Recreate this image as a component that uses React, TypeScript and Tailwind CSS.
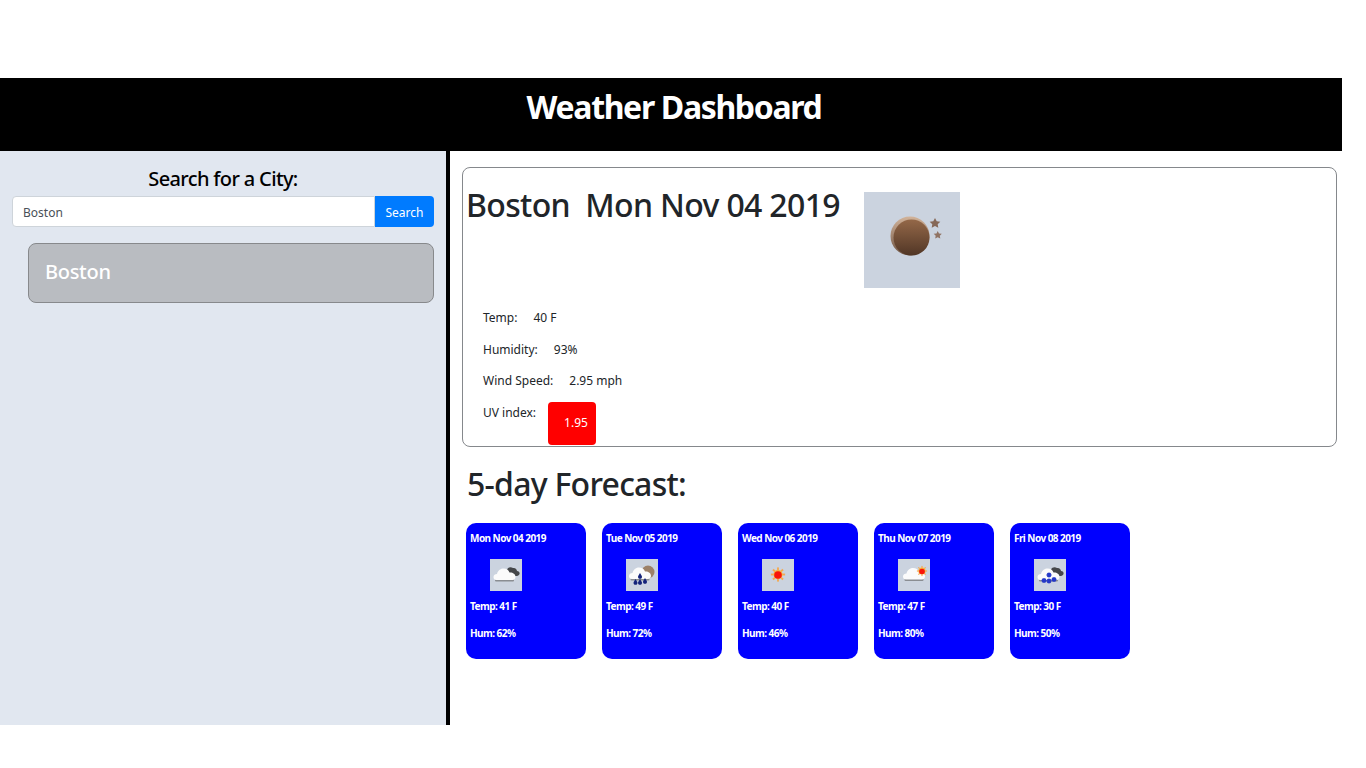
const font = "font-['Noto_Sans',sans-serif]";

function MoonIcon() {
  return (
    <svg viewBox="0 0 96 96" className="w-full h-full">
      <defs>
        <linearGradient id="moon" x1="0" y1="0" x2="0" y2="1">
          <stop offset="0" stopColor="#946848" />
          <stop offset="1" stopColor="#513626" />
        </linearGradient>
        <linearGradient id="rim" x1="0" y1="0" x2="0" y2="1">
          <stop offset="0" stopColor="#d2b39a" />
          <stop offset="1" stopColor="#6f5443" />
        </linearGradient>
      </defs>
      <circle cx="46" cy="44" r="19.500" fill="url(#rim)" />
      <circle cx="47.500" cy="45.500" r="18" fill="url(#moon)" />
      <path d="M71 26l1.700 3.300 3.600.4-2.600 2.500.6 3.600-3.300-1.800-3.300 1.800.6-3.600-2.600-2.500 3.600-.4z" fill="#7a5540" opacity="0.85" />
      <path d="M73.700 39l1.300 2.500 2.800.3-2 1.900.5 2.800-2.600-1.300-2.500 1.300.5-2.800-2-1.900 2.800-.3z" fill="#86624e" opacity="0.85" />
    </svg>
  );
}

function Cloud({ x = 0, y = 0 }: { x?: number; y?: number }) {
  return (
    <g transform={`translate(${x} ${y})`}>
      <path d="M5 20.500h19v1a1 1 0 0 1-1 1H6a1 1 0 0 1-1-1z" fill="#8a8d92" />
      <path
        d="M6.500 21C4 21 3.500 19.500 3.500 18C3.500 16 5 15 7 15C8 11 11 9.500 13.500 9.500C16.500 9.500 18.500 11 19.500 13.500C22 13 25.500 14.500 25.500 18C25.500 20 24 21 22.500 21Z"
        fill="#fbfbfb"
      />
    </g>
  );
}

function DarkCloud() {
  return (
    <path
      d="M17 10.500C18 8 21 7.500 23 9C25 8.500 27 10 27 12C29 12 30 13.500 29.500 15C29 16.500 27.500 17 26 17H20Z"
      fill="#45474a"
    />
  );
}

function Sun({ cx, cy, r, ray }: { cx: number; cy: number; r: number; ray: number }) {
  const rays = [0, 45, 90, 135, 180, 225, 270, 315];
  return (
    <g>
      {rays.map((a) => (
        <rect
          key={a}
          x={cx - ray / 3}
          y={cy - r - ray - 0.5}
          width={(ray * 2) / 3}
          height={ray}
          fill="#f4a950"
          transform={`rotate(${a} ${cx} ${cy})`}
        />
      ))}
      <circle cx={cx} cy={cy} r={r + 0.8} fill="#f7b23a" />
      <circle cx={cx} cy={cy + 0.5} r={r} fill="#f8140a" />
    </g>
  );
}

function Drop({ x, y }: { x: number; y: number }) {
  return <path d={`M${x} ${y - 3}l1.800 3a2 2 0 1 1-3.600 0z`} fill="#14237a" />;
}

function Flake({ x, y }: { x: number; y: number }) {
  return (
    <g stroke="#2438c8" strokeWidth="1.300">
      <path d={`M${x} ${y - 2.500}v5M${x - 2.500} ${y}h5M${x - 1.700} ${y - 1.700}l3.400 3.400M${x + 1.700} ${y - 1.700}l-3.400 3.400`} />
    </g>
  );
}

function ForecastIcon({ kind }: { kind: string }) {
  return (
    <svg viewBox="0 0 32 32" className="w-8 h-8 bg-[#cbd3df] ml-5 mt-[14px]">
      {kind === "cloudy" && (
        <g>
          <DarkCloud />
          <Cloud />
        </g>
      )}
      {kind === "rain" && (
        <g>
          <circle cx="22" cy="13" r="6.500" fill="#9c8168" />
          <Cloud x={-0.5} y={-1} />
          <Drop x={14} y={17} />
          <Drop x={9.500} y={23} />
          <Drop x={14} y={23} />
          <Drop x={19} y={22} />
        </g>
      )}
      {kind === "sun" && <Sun cx={16} cy={15.500} r={3.800} ray={2.800} />}
      {kind === "partly" && (
        <g>
          <Cloud x={1.500} y={-0.5} />
          <Sun cx={24} cy={12} r={2.800} ray={1.800} />
        </g>
      )}
      {kind === "snow" && (
        <g>
          <DarkCloud />
          <Cloud />
          <Flake x={15} y={16} />
          <Flake x={10} y={21.500} />
          <Flake x={15} y={22} />
          <Flake x={20} y={20.500} />
        </g>
      )}
    </svg>
  );
}

const days = [
  { date: "Mon Nov 04 2019", kind: "cloudy", temp: "41", hum: "62" },
  { date: "Tue Nov 05 2019", kind: "rain", temp: "49", hum: "72" },
  { date: "Wed Nov 06 2019", kind: "sun", temp: "40", hum: "46" },
  { date: "Thu Nov 07 2019", kind: "partly", temp: "47", hum: "80" },
  { date: "Fri Nov 08 2019", kind: "snow", temp: "30", hum: "50" },
];

export default function App() {
  return (
    <div className={`${font} bg-white min-h-[768px] pt-[78px] text-[#212529]`}>
      <div className="w-[1342px]">
        <header className="bg-black h-[73px] pt-[7px] pl-[6px] text-center">
          <h1 className="text-[32px] leading-[44px] font-bold text-white tracking-[-1.35px]">Weather Dashboard</h1>
        </header>

        <div className="flex h-[574px]">
          <aside className="w-[450px] shrink-0 bg-[#e1e7f0] border-r-4 border-black pl-3 pr-3">
            <h2 className="text-[20px] leading-[24px] font-medium text-black text-center mt-4 tracking-[-0.65px]">Search for a City:</h2>
            <div className="flex mt-[5px] w-[422px] h-[31px]">
              <input
                readOnly
                value="Boston"
                className="flex-1 min-w-0 bg-white border border-[#ced4da] rounded-l px-[10px] pt-[2px] text-xs text-[#495057] outline-none"
              />
              <button className="w-[59px] bg-[#007bff] rounded-r pt-[2px] text-xs text-white">Search</button>
            </div>
            <div className="ml-4 mt-4 w-[406px] h-[60px] bg-[#b9bcc1] border border-[#87898c] rounded-lg pl-4 pb-[2px] flex items-center">
              <span className="text-[20px] font-medium text-white tracking-[-0.3px]">Boston</span>
            </div>
          </aside>

          <main className="flex-1 pl-3 pr-[5px] pt-4">
            <section className="h-[280px] border border-[#85888c] rounded-lg pl-1 pt-6">
              <div className="flex h-24">
                <h2 className="w-[397px] -ml-[1px] mr-[1px] text-[32px] leading-[26px] font-medium whitespace-pre tracking-[-0.65px]">Boston  Mon Nov 04 2019</h2>
                <div className="w-24 h-24 bg-[#cbd3df]">
                  <MoonIcon />
                </div>
              </div>
              <div className="pl-4 text-xs mt-[22px]">
                <p className="leading-4">Temp:<span className="ml-4">40 F</span></p>
                <p className="leading-4 mt-4">Humidity:<span className="ml-4">93%</span></p>
                <p className="leading-4 mt-[15px]">Wind Speed:<span className="ml-4">2.95 mph</span></p>
                <div className="flex items-start mt-[13px]">
                  <span className="leading-4 mt-[3px]">UV index:</span>
                  <span className="ml-3 w-12 h-[43px] bg-[#ff0000] rounded-sm text-white pl-4 pt-[13px] leading-4">1.95</span>
                </div>
              </div>
            </section>

            <h2 className="ml-[5px] mt-[15px] text-[32px] leading-[44px] font-medium tracking-[-0.75px]">5-day Forecast:</h2>

            <div className="flex gap-4 ml-1 mt-[17px]">
              {days.map((d) => (
                <div key={d.date} className="w-[120px] h-[136px] bg-[#0000ff] rounded-[10px] pl-1 pt-2 text-white text-[10px] font-bold tracking-[-0.55px]">
                  <p className="leading-[14px]">{d.date}</p>
                  <ForecastIcon kind={d.kind} />
                  <p className="leading-[14px] mt-2">Temp: {d.temp} F</p>
                  <p className="leading-[14px] mt-[13px]">Hum: {d.hum}%</p>
                </div>
              ))}
            </div>
          </main>
        </div>
      </div>
    </div>
  );
}
